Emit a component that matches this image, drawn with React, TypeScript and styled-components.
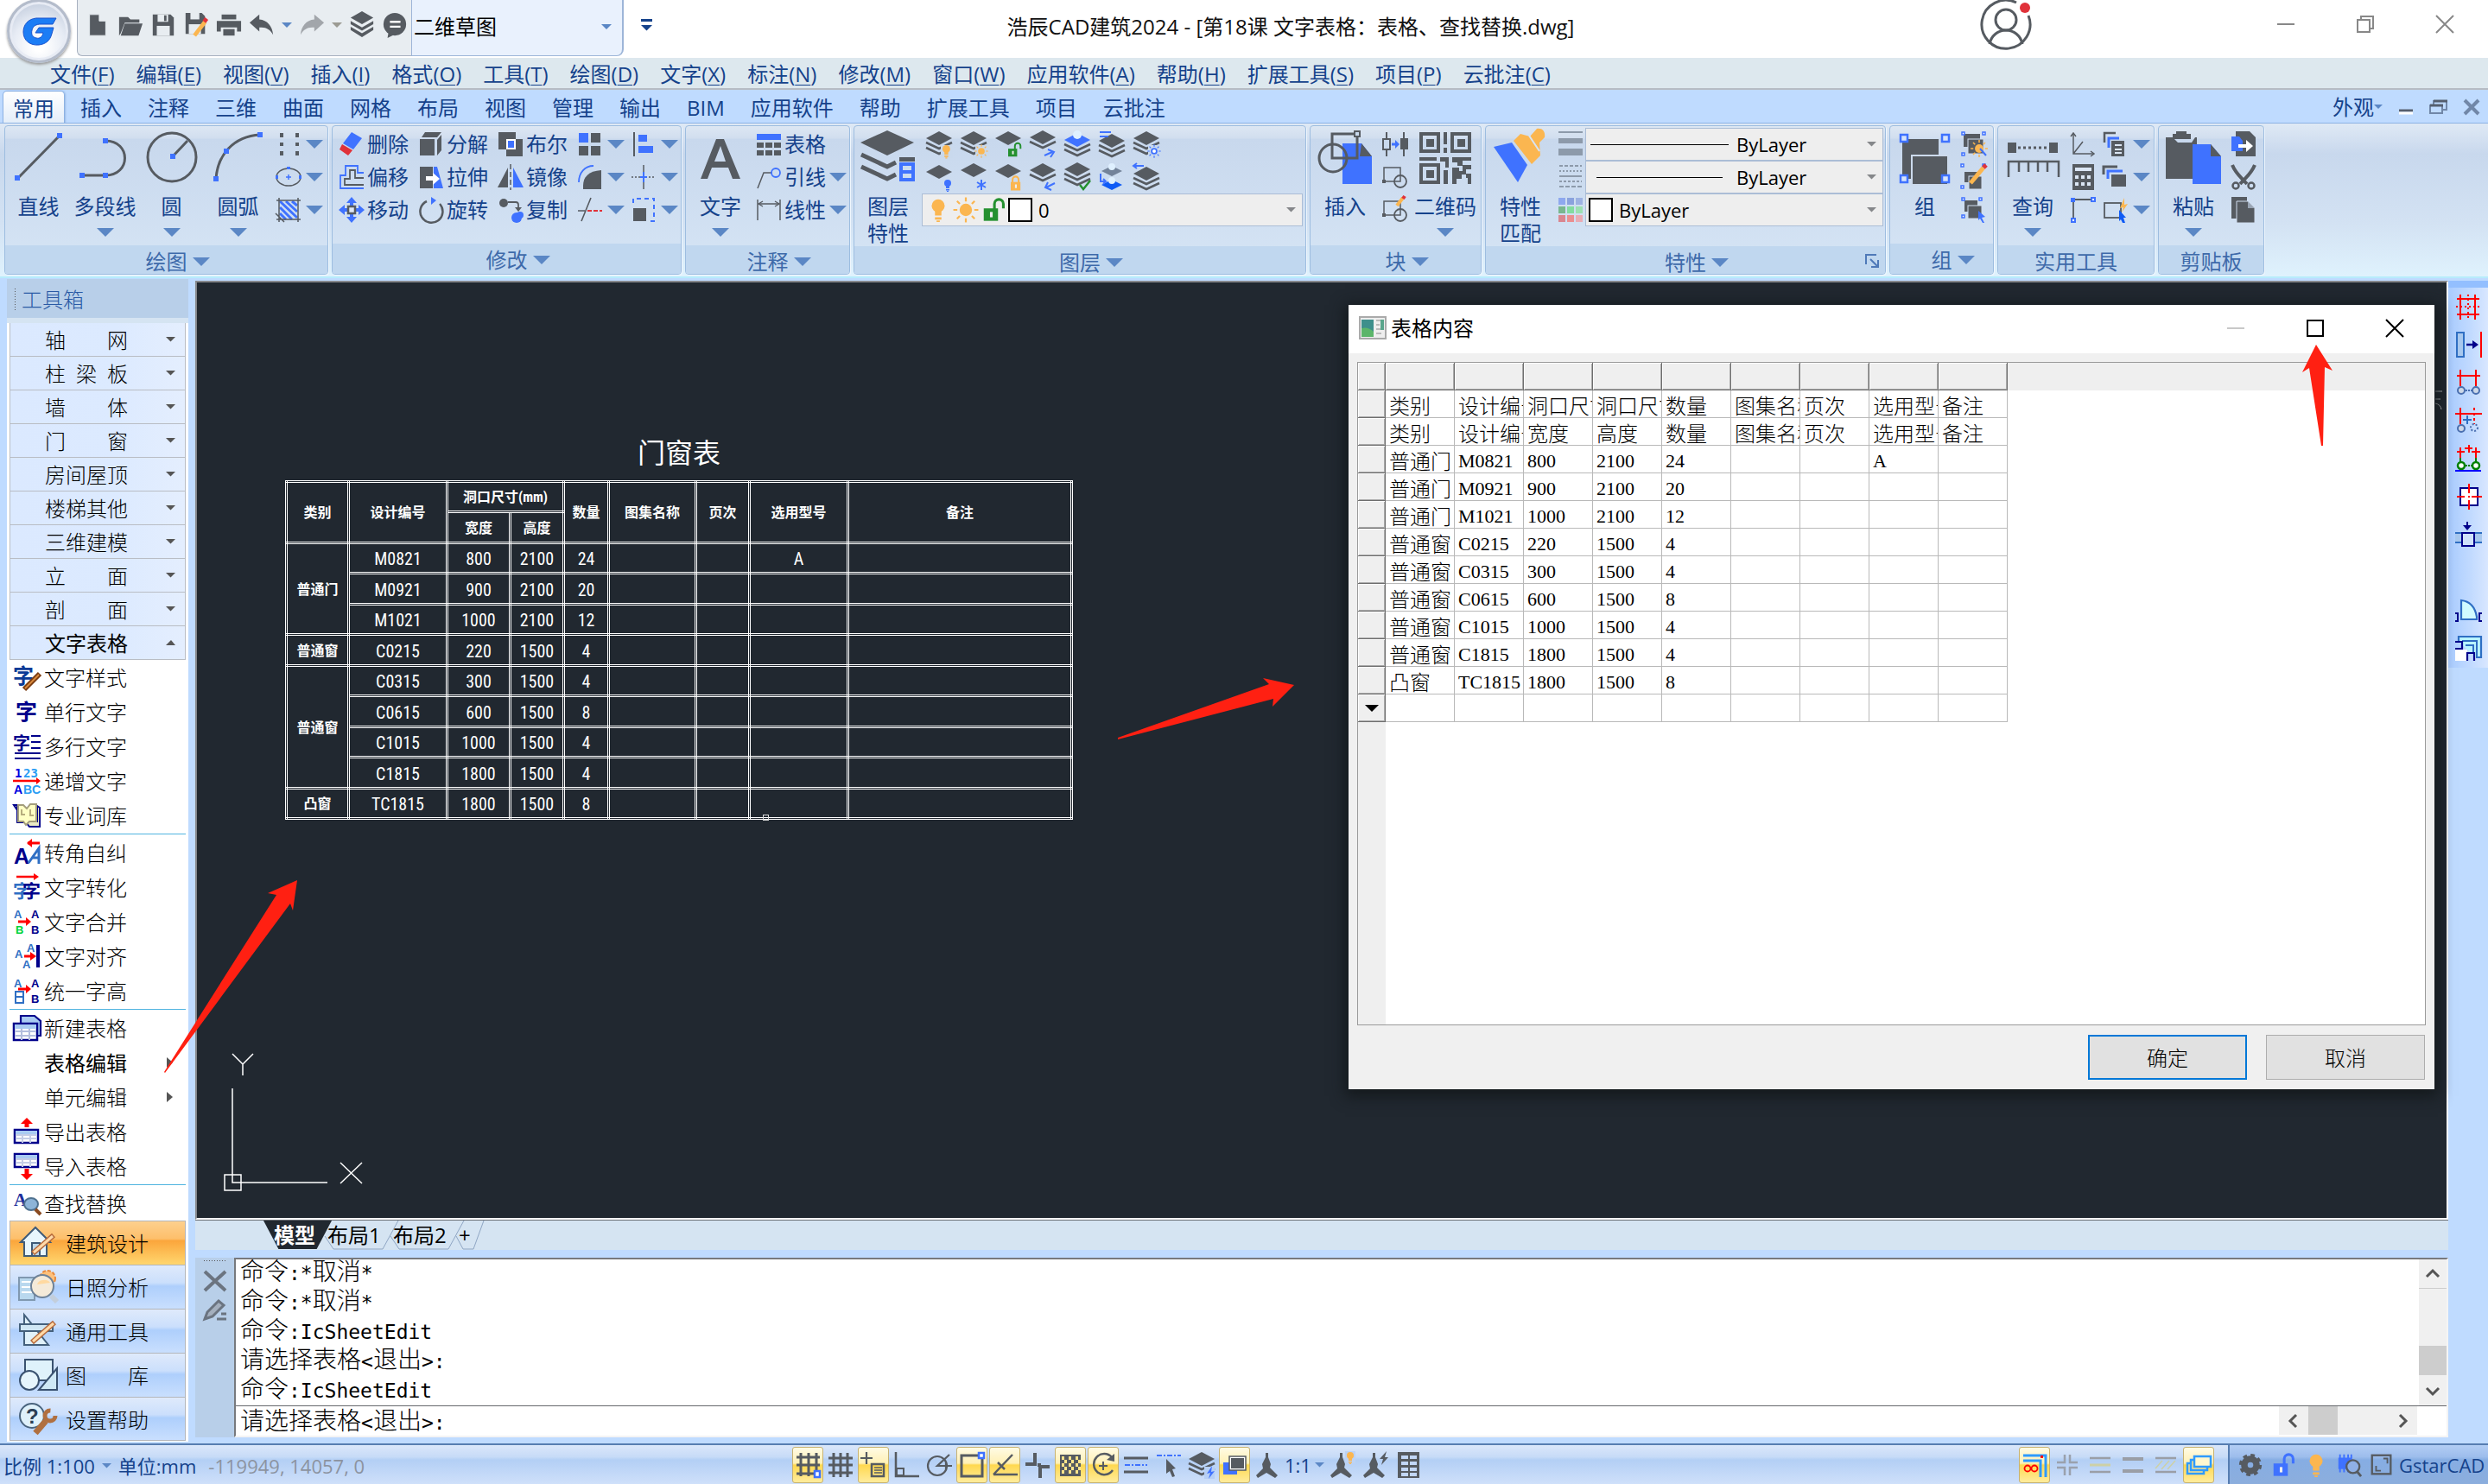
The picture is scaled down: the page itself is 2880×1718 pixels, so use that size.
import React, { ReactNode } from "react";
import styled, { createGlobalStyle, css } from "styled-components";

const UI = '"Open Sans", "Noto Sans CJK SC", sans-serif';
const SONG = '"Noto Sans CJK SC", sans-serif';
const D = "#565b61";
const B = "#3f72ff";
const O = "#fbb650";
const G = "#24902f";
const R = "#e0323a";
const NAVY = "#00008b";
const MID = "#2f6fc4";
const RED = "#ff0000";
const INK = "#15428b";

const Global = createGlobalStyle`
  *, *::before, *::after { box-sizing: border-box; }
  body { margin: 0; background: #bfdbff; font-family: ${UI}; font-size: 24px; line-height: 32px; color: ${INK}; }
  button { border: 0; margin: 0; padding: 0; background: none; font: inherit; color: inherit; text-align: left; }
  select, input { font: inherit; color: inherit; border: 0; margin: 0; padding: 0; background: transparent; outline: 0; appearance: none; }
  svg { display: block; flex: none; overflow: visible; }
`;

const Page = styled.div`
  display: flex;
  flex-direction: column;
  min-height: 100vh;
  white-space: nowrap;
`;

/* ---------- icons ---------- */

type IconProps = { name: string; size?: number };

const stack = (y: number, top = D, n = 2, w = 15) => (
  <g>
    <path d={`M16 ${y}l${w} 8-${w} 8-${w}-8z`} fill={top} />
    {Array.from({ length: n }, (_, i) => (
      <path key={i} d={`M${16 - w} ${y + 13 + i * 6}l${w} 7 ${w}-7`} fill="none" stroke={D} strokeWidth="2.5" />
    ))}
  </g>
);

const tri = (pts: string, fill: string) => <polygon points={pts} fill={fill} />;
const ln = (d: string, c = D, w = 2, dash?: string) => (
  <path d={d} fill="none" stroke={c} strokeWidth={w} strokeDasharray={dash} />
);
const rc = (x: number, y: number, w: number, h: number, fill: string, stroke?: string, sw = 2) => (
  <rect x={x} y={y} width={w} height={h} fill={fill} stroke={stroke} strokeWidth={stroke ? sw : undefined} />
);
const glyph = (t: string, x: number, y: number, size: number, fill: string, family = "Liberation Sans") => (
  <text x={x} y={y} fontSize={size} fontWeight="700" fill={fill} fontFamily={`"${family}", "Noto Sans CJK SC", sans-serif`}>
    {t}
  </text>
);
const bulb = (x: number, y: number, k: number, c: string) => (
  <g fill={c} transform={`translate(${x} ${y}) scale(${k})`}>
    <circle cx="8" cy="8" r="8" />
    <path d="M4 12h8v8H4zM4 22h8v3H4zM6 26h4v2H6z" />
  </g>
);
const lock = (x: number, y: number, k: number, c: string, open = true) => (
  <g transform={`translate(${x} ${y}) scale(${k})`}>
    <path d={open ? "M12 12V6a5 5 0 0110 0v5" : "M3 12V7a5 5 0 0110 0v5"} fill="none" stroke={c} strokeWidth="3" />
    <rect x="0" y="11" width="16" height="14" fill={c} />
    <rect x="7" y="15" width="3" height="6" fill="#eee" />
  </g>
);
const sun = (x: number, y: number, r: number, c: string) => (
  <g>
    <circle cx={x} cy={y} r={r * 0.55} fill={c} />
    {[0, 45, 90, 135, 180, 225, 270, 315].map((a) => (
      <path key={a} d={`M${x} ${y - r * 0.75}v${-r * 0.35}`} stroke={c} strokeWidth={r / 6} transform={`rotate(${a} ${x} ${y})`} />
    ))}
  </g>
);
const corners = (a: number, b: number, s: number, c = B) =>
  [[a, a], [b, a], [a, b]].map(([x, y]) => <rect key={`${x}-${y}`} x={x} y={y} width={s} height={s} fill="#fff" stroke={c} strokeWidth="1.5" />);
const compass = <path d="M14 2h3v5l3 8-1 4 9 9-3 3-10-6-10 6-2-3 8-8-1-5 4-8z" fill={D} />;
const sheetGrid = (y: number) => (
  <g>
    {rc(2, y, 27, 15, "#fff", NAVY, 2.5)}
    {rc(3, y + 1, 25, 4, "#a9cbf2")}
    {ln(`M3 ${y + 6}h25M3 ${y + 10}h25M11 ${y + 5}v10M20 ${y + 5}v10`, "#c4cde6", 2)}
  </g>
);

const shapes: Record<string, ReactNode> = {
  points: <path d="M6 3h4v5H6zM24 3h4v5h-4zM6 14h4v4H6zM24 14h4v4h-4zM6 24h4v5H6zM24 24h4v5h-4z" fill={D} />,
  ellipse: <g><ellipse cx="16" cy="16" rx="14" ry="10" fill="none" stroke={D} strokeWidth="1.5" />{ln("M16 13v6M13 16h6", B, 1.5)}{rc(14, 4, 4, 3, B)}{rc(1, 14, 3, 4, B)}{rc(28, 14, 3, 4, B)}</g>,
  hatch: <g>{ln("M6 6l20 19M6 13l14 14M6 20l7 7M13 6l13 12M20 6l6 5", B, 3)}{ln("M2 5h28M2 27h28M5 2v28M27 2v28M1 20l10 10", D, 1.5)}</g>,
  erase: <g>{tri("16,2 28,9 18,22 6,15", B)}{tri("5,16 17,23 12,29 2,22", R)}</g>,
  explode: <g fill={D}><path d="M3 10h17v19H3zM9 2h19l-5 6H5zM23 11l5-6v18l-5 6z" /></g>,
  boolean: <g>{rc(2, 2, 20, 20, D)}{rc(11, 10, 19, 20, D)}{rc(11, 10, 11, 12, "#fff")}{rc(13, 12, 7, 8, B)}</g>,
  array: <g>{rc(3, 3, 11, 11, B)}{rc(17, 3, 11, 11, D)}{rc(3, 18, 11, 11, D)}{rc(17, 18, 11, 11, D)}</g>,
  align: <g>{ln("M5 2v28", D, 2)}{rc(10, 5, 10, 8, B)}{rc(10, 18, 17, 8, B)}</g>,
  offset: <g>{ln("M30 29H3V14h6V3h14v8h7", B, 1.8)}{ln("M30 25H8v-7h6V8h6v9h10", D, 1.8)}</g>,
  stretch: <g>{rc(3, 4, 15, 25, D)}{tri("19,4 23,4 30,29 19,29", B)}<path d="M10 15h8v-4l8 7-8 7v-5h-8z" fill="#fff" /></g>,
  mirror: <g>{tri("13,5 13,28 1,28", D)}{ln("M16 1v30", D, 1.5, "6 3")}{tri("19,5 31,28 19,28", B)}</g>,
  fillet: <g><path d="M8 30V26C8 16 14 9 29 8v22z" fill={D} />{ln("M3 22C3 11 10 3 20 3", B, 1.8)}</g>,
  breakAt: <g>{ln("M2 16h28", D, 1.5, "2 2")}{ln("M16 2v28", D, 1.5, "9 10")}{ln("M16 10v12M12 16h8", B, 2)}</g>,
  move: <g><path d="M16 1l6 7h-4v16h4l-6 7-6-7h4V8h-4zM1 16l7-6v4h16v-4l7 6-7 6v-4H8v4z" fill={B} />{rc(12, 12, 8, 8, "#dfe8f5", D, 2.5)}</g>,
  rotate: <g>{ln("M11 6A13 13 0 1026 9", D, 2.5)}{tri("16,1 22,5 16,10", B)}</g>,
  copy: <g><circle cx="8" cy="8" r="5" fill={D} />{ln("M13 7h9q3 0 3 3v4", D, 1.8)}{tri("21,13 29,13 25,18", D)}<circle cx="23" cy="25" r="6" fill={B} /><circle cx="27" cy="22" r="4" fill={B} /></g>,
  trim: <g>{ln("M6 29L17 2M2 17h8", D, 1.6)}{ln("M13 17h17", R, 2, "5 2")}</g>,
  scale: <g>{ln("M4 8V3h24v26h-5", B, 2, "5 4")}{rc(4, 14, 15, 15, D)}</g>,
  table: <g>{rc(2, 4, 28, 7, B)}{[2, 12, 22].map((x) => <g key={x}>{rc(x, 14, 8, 6, D)}{rc(x, 23, 8, 6, D)}</g>)}</g>,
  leader: <g>{ln("M3 29L10 11h9", D, 1.5)}<circle cx="24" cy="11" r="5" fill="none" stroke={B} strokeWidth="1.8" /></g>,
  dim: <g>{ln("M3 4v24M29 4v24M4 9h24", D, 1.5)}{ln("M9 6l-5 3 5 3M23 6l5 3-5 3", D, 1.3)}</g>,
  ly1: <g>{stack(1)}{rc(18, 17, 14, 15, "#c9d9ed")}{bulb(20, 17, 0.55, O)}</g>,
  ly2: <g>{stack(1)}{rc(18, 17, 14, 15, "#c9d9ed")}{sun(25, 24, 7, O)}</g>,
  ly3: <g>{stack(1, D, 0)}{lock(16, 14, 0.65, G)}</g>,
  ly4: <g>{stack(0, D, 1)}{ln("M18 29l9-4M22 22l7 3-4 6", B, 2)}</g>,
  ly5: <g>{stack(3, B)}<circle cx="16" cy="5" r="5" fill="#dff0ff" /></g>,
  ly6: <g>{stack(4)}{ln("M2 2h13M2 7h10", B, 2)}</g>,
  ly7: <g>{stack(1)}{rc(18, 17, 14, 15, "#c9d9ed")}{sun(25, 24, 7, B)}<circle cx="25" cy="24" r="2" fill="#fff" /></g>,
  ly8: <g>{stack(2, D, 0)}{bulb(22, 19, 0.5, B)}</g>,
  ly9: <g>{stack(0, D, 0)}{ln("M25 19v12M20 22l10 6M20 28l10-6", B, 2)}</g>,
  ly10: <g>{stack(1, D, 0)}{lock(19, 14, 0.7, O, false)}</g>,
  ly11: <g>{stack(0, D, 1)}{ln("M30 23l-10 5M22 22l-3 6 7 3", B, 2)}</g>,
  ly12: <g>{stack(-1)}{ln("M19 25l4 5 8-10", G, 2.5)}</g>,
  ly13: <g>{tri("16,3 28,9 16,15 4,9", "#73839a")}{tri("16,19 28,25 16,31 4,25", "#0f5bf5")}{ln("M3 12v9h6M6 18l3 3-3 3", B, 2)}<circle cx="16" cy="4" r="4" fill="#dff0ff" /><circle cx="16" cy="20" r="4" fill="#dff0ff" /></g>,
  ly14: <g>{stack(4)}{ln("M1 3h12M5 0L1 3l4 3", B, 2)}</g>,
  blk1: <g>{ln("M6 2v28M26 2v28", D, 2)}{rc(2, 10, 8, 12, "#c9d9ed", D)}{rc(22, 9, 9, 13, D)}{ln("M12 16h5", B, 3)}{tri("16,11 21,16 16,21", B)}</g>,
  blk2: <g>{rc(3, 5, 19, 16, "none", D, 1.5)}<circle cx="22" cy="21" r="7" fill="none" stroke={D} strokeWidth="1.8" />{rc(1, 19, 4, 4, D)}</g>,
  blk3: <g>{rc(3, 6, 19, 16, "none", D, 1.5)}<circle cx="22" cy="22" r="7" fill="none" stroke={D} strokeWidth="1.8" />{rc(1, 20, 4, 4, D)}{ln("M18 11l7-9", O, 4)}{ln("M25 3l2-3", R, 4)}</g>,
  weights: <g>{rc(2, 1, 28, 2, "#8d9aaa")}{rc(2, 9, 28, 6, "#8d9aaa")}{rc(2, 21, 28, 8, "#8d9aaa")}</g>,
  types: <g>{ln("M3 3h26", "#8d9aaa", 2, "4 2")}{ln("M3 9h26", "#8d9aaa", 2, "2 2")}{ln("M3 15h26", "#8d9aaa", 2)}{ln("M3 21h26", "#8d9aaa", 2, "3 2")}{ln("M3 27h26", "#8d9aaa", 2, "5 2")}</g>,
  colors: <g>{["#8ea8ee", "#8aa2dd", "#9db2e2", "#79b78f", "#83dca0", "#9be0b1", "#d9868f", "#ea8f90", "#e9abb4"].map((c, i) => <rect key={i} x={2 + (i % 3) * 10} y={2 + Math.floor(i / 3) * 10} width="8" height="8" fill={c} />)}</g>,
  grp1: <g>{rc(4, 4, 19, 15, D)}{rc(9, 10, 18, 17, D, "#d0ddef", 1)}{corners(2, 26, 3)}{sun(22, 21, 9, O)}{ln("M23 21l7 8", B, 2)}</g>,
  grp2: <g>{rc(5, 10, 16, 12, D)}{rc(10, 15, 15, 15, D, "#d0ddef", 1)}{corners(1, 26, 3)}{ln("M12 23L27 5", O, 5)}{ln("M27 5l3-3", R, 5)}</g>,
  grp3: <g>{rc(5, 5, 15, 13, D)}{rc(9, 11, 16, 15, D, "#d0ddef", 1)}{corners(2, 22, 3)}{tri("21,17 29,24 25,25 28,31 26,31 23,26 21,28", B)}</g>,
  ucs: <g>{ln("M5 3v24h24M5 27l11-14", D, 1.5)}{ln("M2 7l3-4 3 4M25 24l4 3-4 3", D, 1.5)}</g>,
  calc: <g>{rc(4, 1, 25, 30, D)}{rc(7, 5, 19, 4, "#dbe6f4")}{[7, 14, 21].map((x) => <g key={x}>{rc(x, 14, 4, 4, "#dbe6f4")}{rc(x, 22, 4, 4, "#dbe6f4")}</g>)}</g>,
  cornerPts: <g>{ln("M5 4h24M5 4v25", D, 1.8)}{rc(2, 2, 5, 5, B)}{rc(26, 2, 4, 4, "#fff", B)}{rc(3, 26, 4, 4, "#fff", B)}</g>,
  copies: <g>{ln("M3 14V3h13", D, 2.5)}{ln("M8 20V9h12", B, 3)}{rc(11, 12, 15, 18, D)}{ln("M15 17h8M15 22h8M15 26h8", "#dbe6f4", 2)}</g>,
  cascade: <g>{ln("M2 13V4h16", D, 3)}{ln("M7 18V9h17", B, 3)}{rc(11, 13, 17, 14, D)}</g>,
  select: <g>{rc(3, 8, 19, 17, "none", D, 1.8)}{tri("26,2 21,14 25,13 23,19 30,9 26,10", O)}{tri("20,16 28,25 25,25 27,31 24,31 22,27 20,29", "#0f5bf5")}</g>,
  paste1: <g><path d="M7 1h16l7 7v22H7z" fill={D} /><path d="M2 7h9l4 5v12H2z" fill={B} /><path d="M10 16h9v-5l8 7-8 7v-5h-9z" fill="#fff" /></g>,
  cut: <g>{ln("M3 2c4 10 9 13 17 22M29 2c-4 10-9 13-17 22", D, 4)}<circle cx="7" cy="26" r="3.5" fill="none" stroke={D} strokeWidth="2.5" /><circle cx="25" cy="26" r="3.5" fill="none" stroke={D} strokeWidth="2.5" /></g>,
  docs: <g>{rc(2, 1, 18, 25, D)}<path d="M8 6h13l8 8v17H8z" fill={D} stroke="#d0ddef" /><path d="M21 6v8h8z" fill="#9aa6b5" /></g>,
  /* quick access */
  new: <path d="M6 3h12l8 8v18H6zM18 3v8h8" fill={D} stroke="#e8edf1" strokeWidth="1" />,
  open: <path d="M2 29V6h11l3 3h11v4H9L4 26M9 14h22l-5 15H4z" fill={D} />,
  save: <g><path d="M3 3h22l4 4v22H3z" fill={D} />{rc(9, 3, 13, 9, "#e8edf1")}{rc(8, 17, 16, 12, "#e8edf1")}{rc(17, 4, 3, 7, D)}</g>,
  saveAs: <g><path d="M3 1h20l4 4v22H3z" fill={D} />{rc(9, 1, 11, 8, "#e8edf1")}{rc(7, 15, 15, 12, "#e8edf1")}{ln("M14 29L27 12", O, 5)}{ln("M26 12l3-4", R, 5)}</g>,
  print: <g>{rc(7, 3, 18, 6, D)}<path d="M1 11h30v13h-5v-5H6v5H1z" fill={D} />{rc(9, 21, 14, 8, D)}</g>,
  undo: <path d="M1 13L13 3v6c10 1 16 8 17 19-4-7-9-10-17-9v5z" fill={D} />,
  redo: <path d="M31 13L19 3v6C9 10 3 17 2 28c4-7 9-10 17-9v5z" fill="#a2a6ab" />,
  layers: <g><path d="M16-1l14 8-14 8L2 7zM2 11l14 8 14-8v4l-14 8-14-8zM2 18l14 8 14-8v4l-14 9-14-9z" fill={D} /></g>,
  chat: <g><circle cx="16" cy="15" r="14" fill={D} /><path d="M8 26l-1 6 8-4z" fill={D} />{ln("M10 12h13M10 18h13", "#fff", 2.5)}</g>,
  /* toolbox */
  tStyle: <g>{glyph("字", 0, 23, 24, "#0a3a96", "Noto Sans CJK SC")}{ln("M13 30L31 12", "#7a3b10", 6)}{ln("M14 29L30 13", "#d98a3d", 2)}</g>,
  tSingle: glyph("字", 3, 25, 25, NAVY, "Noto Sans CJK SC"),
  tMulti: <g>{glyph("字", 0, 20, 20, NAVY, "Noto Sans CJK SC")}{ln("M21 4h11M21 11h11M21 18h11M2 24h30M2 30h30", NAVY, 2)}</g>,
  tInc: <g>{glyph("1", 2, 12, 14, "#0000e0", "DejaVu Sans Mono")}{glyph("23", 12, 12, 14, "#2a9df4", "DejaVu Sans Mono")}{ln("M0 16h30", RED, 2.5)}{tri("27,12 32,16 27,20", RED)}{glyph("A", 1, 31, 14, "#0000e0")}{glyph("BC", 12, 31, 14, "#2a9df4")}</g>,
  tBook: <g><path d="M1 4h4v20h10l4 5h12V7l-3-2v18H14z" fill="#e9e9c4" stroke={NAVY} strokeWidth="2" /><path d="M6 4h6l4 4 4-5h7v20h-8l-4 4-3-4H6z" fill="#ffffc4" stroke="#a39d7c" strokeWidth="2" />{ln("M10 9v6h4M20 9v7h4", "#b7ad7e", 2)}</g>,
  tRotate: <g>{ln("M17 5h14", RED, 3)}{tri("16,5 22,0 22,10", RED)}{glyph("A", 1, 29, 25, NAVY)}{ln("M18 28l12-17v18M22 22h8", MID, 3)}</g>,
  tConvert: <g>{ln("M4 4h22", RED, 2.5)}{tri("24,0 30,4 24,8", RED)}{glyph("字", 0, 28, 21, MID, "Noto Sans CJK SC")}{glyph("字", 11, 28, 21, NAVY, "Noto Sans CJK SC")}</g>,
  tMerge: <g>{glyph("A", 1, 12, 13, MID)}{glyph("B", 3, 30, 13, "#00d43a")}{glyph("A", 21, 12, 13, NAVY)}{glyph("B", 21, 30, 13, NAVY)}{ln("M6 16h10", RED, 3)}{tri("15,11 21,16 15,21", RED)}</g>,
  tAlign: <g>{glyph("A", 2, 18, 13, MID)}{glyph("A", 16, 11, 13, MID)}{glyph("A", 11, 30, 13, MID)}{ln("M29 3v26", NAVY, 4)}{ln("M13 16h8", RED, 3)}{tri("20,11 27,16 20,21", RED)}</g>,
  tHeight: <g>{glyph("A", 1, 12, 13, MID)}{rc(3, 17, 9, 13, "none", MID)}{ln("M3 23h9", MID)}{glyph("A", 21, 12, 13, NAVY)}{glyph("B", 21, 30, 13, NAVY)}{ln("M6 14h10", RED, 3)}{tri("15,9 21,14 15,19", RED)}</g>,
  tNew: <g><path d="M9 11V2h16l7 6v17h-4" fill="#a9cbf2" stroke={NAVY} strokeWidth="2.2" />{rc(1, 11, 27, 19, "#fff", NAVY, 2.5)}{rc(2, 12, 25, 5, "#a9cbf2")}{ln("M2 20h25M2 25h25M10 17v13M19 17v13", "#b4bede", 2)}</g>,
  tExport: <g>{tri("16,0 23,7 9,7", RED)}{ln("M16 5v6", RED, 5)}{sheetGrid(14)}</g>,
  tImport: <g>{sheetGrid(2)}{ln("M16 19v7", RED, 5)}{tri("9,25 23,25 16,32", RED)}</g>,
  tFind: <g>{glyph("A", 1, 19, 21, "#1d2f9c", "Liberation Serif")}<ellipse cx="21" cy="17" rx="8" ry="7" fill="#8db4d8" stroke="#4f718f" strokeWidth="2" />{ln("M26 23l6 6", "#8a4a20", 4)}</g>,
  /* right palette */
  p1: <g>{ln("M3 7h26M3 25h26M7 2v29M24 2v29", RED, 2)}{ln("M2 16h28M16 2v28", RED, 2, "2 3")}</g>,
  p2: <g>{rc(3, 2, 8, 28, "#a8c8ee", MID)}{ln("M14 16h10", NAVY, 2.5)}{tri("21,11 28,16 21,21", NAVY)}{ln("M31 1v30", RED, 2)}</g>,
  p3: <g>{ln("M3 8h27M7 1v19M25 1v19", RED, 2)}<circle cx="8" cy="25" r="4" fill="#cdd8e8" stroke="#4a6fb0" strokeWidth="2" /><circle cx="25" cy="25" r="4" fill="#cdd8e8" stroke="#4a6fb0" strokeWidth="2" />{ln("M13 25h8", "#4a6fb0", 2, "2 1")}</g>,
  p4: <g>{ln("M1 8h31M7 1v19", RED, 2)}{ln("M23 1v19", RED, 2, "3 3")}<circle cx="8" cy="25" r="4" fill="#cdd8e8" stroke="#4a6fb0" strokeWidth="2" /><circle cx="23" cy="24" r="4" fill="none" stroke="#4a6fb0" strokeWidth="2" strokeDasharray="2 2" />{ln("M15 10v10M10 15h10", MID, 2)}</g>,
  p5: <g>{ln("M3 8h9M20 8h10M7 3v12M25 3v12M12 4h9M17 0v9", RED, 2)}{ln("M7 15v6M25 15v6", "#008000", 2)}<circle cx="8" cy="24" r="4" fill="#fff" stroke="#008000" strokeWidth="2.5" /><circle cx="25" cy="24" r="4" fill="#fff" stroke="#008000" strokeWidth="2.5" />{ln("M13 24h8", "#008000", 2, "2 1")}{ln("M1 30h30", "#0000ff", 2)}</g>,
  p6: <g>{rc(7, 6, 20, 20, "#fff", NAVY)}{ln("M3 16h9M20 16h12M17 1v11M17 20v11", RED, 2)}{rc(16, 15, 2, 2, RED)}</g>,
  p7: <g>{rc(1, 14, 31, 11, "#a8c8ee")}{ln("M1 14h31M1 25h31", MID, 2)}{rc(9, 14, 14, 15, "#cfe1fb", NAVY)}{ln("M15 1v6", NAVY, 2)}{tri("10,5 20,5 15,11", NAVY)}</g>,
  p9: <g><path d="M8 26V4c10 1 16 8 18 19v3z" fill="#d0fbff" stroke={MID} strokeWidth="2.2" />{ln("M1 19h3v9H1M32 19h-3v9h3", NAVY, 2)}</g>,
  p10: <g><path d="M5 8V2h26v24h-6" fill="#b8f4ff" stroke={MID} strokeWidth="2.2" />{ln("M9 7h17v18M13 12h9v10", MID, 2)}<path d="M1 17h14v13H1z" fill="#fff" />{ln("M1 8h8v8H1M15 30v-9h8v9", NAVY, 2.2)}</g>,
  /* status */
  s1: <g>{ln("M8 2v27M17 2v27M26 2v27M3 7h27M3 16h27M3 26h27", D, 3)}{rc(24, 23, 6, 7, "#fff", B, 2.5)}</g>,
  s2: ln("M8 2v28M16 2v28M24 2v28M2 8h28M2 16h28M2 25h28", D, 3),
  s3: <g>{ln("M8 1v14M1 8h14", D, 2.2)}{rc(14, 15, 14, 14, "none", D, 2.5)}{ln("M17 19h9M17 22h9M17 25h9", D, 1.6)}</g>,
  s4: <g>{ln("M4 1v28h27", D, 2.5)}{rc(5, 20, 8, 8, "none", D, 2)}</g>,
  s5: <g><circle cx="14" cy="17" r="11" fill="none" stroke={D} strokeWidth="2.2" />{ln("M31 17H14L28 4M24 12v10", D, 2.2)}</g>,
  s6: <g>{rc(4, 5, 24, 24, "none", D, 3)}{rc(24, 2, 6, 6, "#fff", B, 2.5)}</g>,
  s7: <g>{ln("M3 27L25 4M3 27h28M8 13l8 8", D, 2.5)}</g>,
  s8: ln("M13 2v13H2M19 31V18h11M8 15h6M18 18v-4", D, 4),
  s9: <g>{rc(4, 4, 24, 25, D)}{Array.from({ length: 15 }, (_, i) => <rect key={i} x={6 + (i % 3) * 8 - (Math.floor(i / 3) % 2) * 0 + (Math.floor(i / 3) % 2 ? 3 : 0)} y={6 + Math.floor(i / 3) * 4} width="3" height="4" fill="#ffe48a" />)}</g>,
  s10: <g>{ln("M26 7A12 12 0 1027 22", D, 2.5)}{tri("29,3 29,12 20,10", D)}{ln("M16 12v10M11 17h10", D, 2)}</g>,
  s11: <g>{ln("M2 8h28M2 24h28", D, 3)}{ln("M3 16h26", B, 2, "6 2 2 2")}</g>,
  s12: <g>{ln("M2 5h28", B, 2, "6 2 2 2")}{tri("13,9 24,20 20,21 23,29 20,30 17,23 13,26", D)}</g>,
  s13: <g>{stack(1)}{rc(19, 18, 12, 14, "#b6cff5")}{tri("28,17 22,26 26,25 24,32 31,23 27,24", B)}</g>,
  s14: <g>{rc(3, 13, 16, 14, B)}{rc(10, 6, 19, 16, "#fff", D, 1.5)}{rc(12, 8, 15, 12, D)}</g>,
  s15: compass,
  s16: <g>{compass}{rc(20, 0, 12, 14, "#bcd3f6")}{bulb(22, 1, 0.5, O)}</g>,
  s17: <g>{compass}{tri("30,0 22,9 26,9 24,16 32,7 28,7", D)}</g>,
  s18: <g>{rc(5, 1, 25, 30, D)}{[9, 19].map((x) => [5, 12, 19, 25].map((y) => <rect key={`${x}${y}`} x={x} y={y} width="8" height="4" fill="#c2d7f7" />))}</g>,
  r1: <g>{ln("M3 5h26v25M3 11h20v19", "#2f9bff", 3)}{rc(23, 5, 3, 3, RED)}<circle cx="8" cy="20" r="3.5" fill="none" stroke={RED} strokeWidth="1.8" /><circle cx="16" cy="20" r="3.5" fill="none" stroke={RED} strokeWidth="1.8" /></g>,
  r2: ln("M13 4v9H4M19 4v9h9M13 28v-9H4M19 28v-9h9", "#9aa1ad", 2.5),
  r3: <g>{ln("M4 8h24M4 24h24", "#9a9ea6", 2.5)}{ln("M4 16h24", "#cdd0a6", 3)}</g>,
  r4: ln("M4 9h24M4 23h24", "#9a9ea6", 4),
  r5: <g>{ln("M4 8h24M4 24h24", "#9a9ea6", 2.5)}{ln("M4 20l8-9M11 21l9-10M18 21l9-10", "#cdd0a6", 1.5)}</g>,
  r6: <g>{rc(3, 14, 19, 12, "#ffe38a", "#2f9bff", 2.5)}{rc(7, 10, 19, 12, "#ffe38a", "#2f9bff", 2.5)}{rc(11, 6, 19, 12, "#fff7cf", "#2f9bff", 2.5)}</g>,
  gear: <g><circle cx="16" cy="16" r="7.5" fill="none" stroke={D} strokeWidth="8" /><circle cx="16" cy="16" r="12" fill="none" stroke={D} strokeWidth="4" strokeDasharray="5 4.4" /></g>,
  unlock: lock(4, 2, 1.1, B),
  bulb: bulb(8, 3, 1, O),
  sun: sun(16, 16, 14, O),
  lockGreen: lock(4, 2, 1.1, G),
  chip: <g>{rc(3, 7, 16, 14, B)}{ln("M5 3v22M10 3v22M15 3v22M19 3v12", B, 2)}<circle cx="21" cy="18" r="8" fill="#8fb0e6" stroke={D} strokeWidth="2.5" />{ln("M26 24l5 6", D, 3)}</g>,
  full: <g>{rc(4, 4, 23, 23, "none", D, 2.5)}{ln("M18 8h5v6M9 17v6h6", D, 2)}</g>,
};

const largeShapes: Record<string, ReactNode> = {
  line: <g>{ln("M7 56L56 6", D, 3)}{rc(4, 52, 6, 6, B)}{rc(53, 3, 6, 6, B)}</g>,
  pline: <g>{ln("M6 52h26c30 0 30-40 0-40", D, 3)}{rc(2, 49, 6, 6, B)}{rc(29, 49, 6, 6, B)}{rc(29, 9, 6, 6, B)}</g>,
  circle: <g><circle cx="32" cy="31" r="28" fill="none" stroke={D} strokeWidth="3" />{ln("M33 30L50 12", D, 3)}{rc(30, 27, 6, 6, B)}</g>,
  arc: <g>{ln("M6 56C8 28 26 7 57 5", D, 3)}{rc(3, 53, 6, 6, B)}{rc(15, 21, 6, 6, B)}{rc(54, 2, 6, 6, B)}</g>,
  letterA: <path d="M9 56L27 10h9l19 46h-9l-5-13H22l-5 13zM25 36h13l-6-18z" fill={D} fillRule="evenodd" />,
  layerProps: <g>{tri("31,0 62,14 31,29 0,14", D)}{ln("M1 28l30 14 10-5M1 42l30 14 10-5", D, 5)}{rc(45, 31, 18, 5, D)}<path d="M45 37h18v22H45zM49 41v5h10v-5zM49 50v5h10v-5z" fill={B} fillRule="evenodd" /></g>,
  insert: <g><path d="M29 15h22l12 15v32H29z" fill={B} /><path d="M51 15l12 15H49z" fill={D} />{rc(17, 4, 29, 28, "none", D, 3)}<circle cx="18" cy="32" r="16" fill="none" stroke={D} strokeWidth="3" />{rc(43, 1, 6, 6, "#c9d9ed", D, 2)}</g>,
  qr: <g fill={D}>{[[2, 2], [38, 2], [2, 38]].map(([x, y]) => <g key={`${x}-${y}`}>{rc(x + 2, y + 2, 20, 20, "none", D, 4)}{rc(x + 8, y + 8, 9, 9, D)}</g>)}<path d="M30 2h4v14h-4zM30 20h4v6h-4zM2 31h20v4H2zM26 31h10v12h-4v-7h-6zM30 46h5v16h-5zM40 31h22v4H52v6h-6v-4h-6zM40 43h8v4h4v-7h10v5h-6v6h-5v5h-6v6h-5V50zM56 50h6v12h-4v-7h-2z" /></g>,
  match: <g><path d="M1 19l21-5 18 26-11 20z" fill={B} /><path d="M24 12l8-8 11 3 8-9c7-1 10 4 9 10l-6 6 1 15-10 10z" fill={O} />{ln("M42 6l12 18", "#d9e4f3", 2)}</g>,
  group: <g>{rc(6, 10, 42, 46, D)}{rc(17, 29, 42, 34, D, "#ccdaec", 2)}{rc(4, 5, 8, 8, "#d6e3fb", B, 2.5)}{rc(52, 5, 8, 8, "#d6e3fb", B, 2.5)}{rc(4, 52, 8, 8, "#d6e3fb", B, 2.5)}{rc(52, 52, 8, 8, "#d6e3fb", B, 2.5)}</g>,
  measure: <g>{rc(3, 14, 10, 12, D)}{rc(51, 14, 10, 12, D)}{ln("M15 20h35", D, 3, "3 3")}{ln("M4 54V36h58v18M16 36v12M27 36v12M38 36v12M49 36v12", D, 2.5)}</g>,
  paste: <g><path d="M0 8h8l6 6h16l4-6h2v12h-5v36H0z" fill={D} /><path d="M8 4h4V1h12v3h5v6H8z" fill={D} /><path d="M31 16h21l12 14v32H31z" fill={B} /><path d="M52 16l12 14H52z" fill={D} /></g>,
};

const Icon = ({ name, size = 32 }: IconProps) => (
  <svg width={size} height={size} viewBox="0 0 32 32" aria-hidden="true">{shapes[name]}</svg>
);
const LargeIcon = ({ name }: IconProps) => (
  <svg width={64} height={64} viewBox="0 0 64 64" aria-hidden="true">{largeShapes[name]}</svg>
);
const Caret = ({ w = 20, fill = "#5b87c5" }: { w?: number; fill?: string }) => (
  <svg width={w} height={w / 2} viewBox="0 0 20 10" aria-hidden="true"><path d="M0 0h20L10 10z" fill={fill} /></svg>
);

/* ---------- title bar ---------- */

const TitleBar = styled.header`
  display: grid;
  grid-template-columns: 1fr auto 1fr;
  align-items: start;
  height: 67px;
  background: #fff;
`;
const TitleLeft = styled.div`display: flex; height: 64px;`;
const Orb = styled.button`
  width: 74px; height: 74px; margin: -1px 7px 0 8px; flex: none; z-index: 1;
  border-radius: 50%; border: 3px solid #b4bccb;
  background: radial-gradient(circle at 50% 75%, #fff 10%, #e6ebf4 50%, #b3bfd3 100%);
  box-shadow: inset 0 0 0 3px #e7ebf4, 0 2px 3px #999;
  display: grid; place-items: center;
`;
const QuickBar = styled.div`
  display: flex; align-items: center;
  height: 65px; padding: 0 0 6px 4px;
  background: #e8edf1; border: solid #a7b0bf; border-width: 0 0 1px 1px;
  border-radius: 0 0 0 6px;
`;
const QuickButton = styled.button<{ $w?: number }>`
  width: ${(p) => p.$w ?? 38}px; height: 40px; display: grid; place-items: center;
`;
const WorkspacePick = styled.label`
  display: flex; align-items: center;
  width: 246px; height: 65px; padding: 0 12px 2px 2px;
  background: #e9f1fd; border: solid #9db5d8; border-width: 0 2px 1px 1px;
  border-radius: 0 0 8px 0;
`;
const PickSelect = styled.select`flex: 1; width: 100%; height: 36px; color: #000;`;
const Customize = styled.button`display: grid; gap: 4px; align-content: center; justify-items: center; width: 52px; height: 58px;`;
const Bar = styled.i`width: 13px; height: 3px; background: ${INK};`;
const Title = styled.h1`margin: 0; padding: 14px 0 0 108px; font: 400 24px/34px ${UI}; color: #111;`;
const TitleRight = styled.div`display: flex; justify-content: flex-end; padding-right: 4px;`;
const UserButton = styled.button`width: 60px; height: 62px; margin-right: 248px;`;
const WinButton = styled.button`width: 92px; height: 56px; display: grid; place-items: center;`;

/* ---------- menus and tabs ---------- */

const MenuBar = styled.nav`
  display: flex; gap: 25px; height: 37px; padding: 3px 0 0 58px;
  background: #dde8ee; border-bottom: 2px solid #b6bcc4;
`;
const MenuItem = styled.button`line-height: 32px; height: 32px;`;
const Key = styled.span`text-decoration: underline; text-underline-offset: 3px; text-decoration-thickness: 1px;`;
const TabBar = styled.nav`
  display: flex; height: 38px; padding: 1px 0 0 3px; background: #bfdbff;
`;
const Tab = styled.button<{ $on?: boolean }>`
  padding: 0 15px; height: 38px; line-height: 40px;
  &:first-child { padding: 0 11px; margin-right: 3px; }
  ${(p) => p.$on && css`
    background: linear-gradient(#fff, #e3edf9); border: 1px solid #8db2e3; border-bottom: 0;
    border-radius: 5px 5px 0 0; box-shadow: 1px 0 2px #9bbbe6;
  `}
`;
const TabTools = styled.div`display: flex; align-items: center; gap: 16px; margin-left: auto; padding-right: 8px;`;
const Look = styled.button`display: flex; align-items: center; line-height: 34px;`;
const MiniButton = styled.button`display: grid; place-items: center; width: 22px; height: 30px;`;

/* ---------- ribbon ---------- */

const Ribbon = styled.section`
  display: flex; gap: 4px; height: 180px; padding: 2px 5px;
  border-top: 1px solid #8db2e3; border-bottom: 2px solid #b7ecfb;
  background: linear-gradient(#dfe9f5 0, #c8d8ed 20%, #d3e2f3 65%, #dff2fd 100%);
`;
const Group = styled.section<{ $w: number }>`
  width: ${(p) => p.$w}px; flex: none;
  display: flex; flex-direction: column;
  border: 1px solid #9dbde0; border-radius: 4px;
  box-shadow: 1px 1px 0 #eff6fd;
  background: linear-gradient(#dde7f3 0, #d1deef 14px, #c8d8ed 15px, #d6e5f5 100%);
  overflow: hidden;
`;
const GroupBody = styled.div<{ $pad?: number }>`
  display: flex; align-items: flex-start; height: 139px; padding-left: ${(p) => p.$pad ?? 0}px;
`;
const GroupLabel = styled.div`
  position: relative;
  display: flex; align-items: center; justify-content: center; gap: 6px; flex: 1; padding-top: 3px;
  background: #c0d7ef; color: #3e6aaa;
`;
const Balance = styled.i`width: 20px;`;
const Launcher = styled.button`position: absolute; right: 7px; top: 9px;`;
const Large = styled.button<{ $w?: number }>`
  width: ${(p) => p.$w ?? 80}px; flex: none; padding-top: 5px;
  display: flex; flex-direction: column; align-items: center;
`;
const LargeText = styled.span`margin-top: 8px; line-height: 31px; text-align: center; white-space: pre;`;
const CaretRow = styled.span`height: 30px; display: grid; place-items: center;`;
const Column = styled.div<{ $w?: number; $pad?: number }>`
  display: flex; flex-direction: column; padding: 2px 0 0 ${(p) => p.$pad ?? 0}px; flex: none;
  width: ${(p) => (p.$w ? `${p.$w}px` : "auto")};
`;
const Small = styled.button<{ $center?: boolean }>`
  display: flex; align-items: center; gap: 2px; height: 38px;
  justify-content: ${(p) => (p.$center ? "center" : "flex-start")};
`;
const Drop = styled.span`padding-left: 2px;`;
const IconRow = styled.div`display: flex;`;
const IconButton = styled.button`width: 40px; height: 38px; display: grid; place-items: center;`;
const Combo = styled.label<{ $w: number }>`
  display: flex; align-items: center; gap: 2px;
  width: ${(p) => p.$w}px; height: 38px; padding: 0 7px 0 3px;
  background: #eee; border: 1px solid #abbdd6; color: #000;
`;
const ComboSelect = styled.select`flex: 1; height: 34px; padding-left: 5px; font-size: 22px; line-height: 34px;`;
const Swatch = styled.i`width: 28px; height: 28px; background: #fff; border: 2px solid #000; flex: none;`;
const Hairline = styled.i<{ $w: number; $pad: number }>`
  width: ${(p) => p.$w}px; height: 1px; margin: 0 ${(p) => p.$pad}px; background: #000; flex: none;
`;

/* ---------- workspace ---------- */

const Workspace = styled.main`display: flex; flex: 1; position: relative; background: #bfdbff;`;
const Toolbox = styled.aside`
  width: 210px; margin: 1px 8px 2px 8px; flex: none; background: #fff; color: #000; font-family: ${SONG};
  display: flex; flex-direction: column;
`;
const ToolboxTitle = styled.h2`
  margin: 0; height: 51px; padding: 0 8px; display: flex; align-items: center; gap: 5px;
  font: 300 24px/45px ${SONG}; color: #2a5aa5; background: #b8cfe9; border-bottom: 6px solid #d5e4f2;
`;
const Grip = styled.i<{ $w: number; $h: number }>`
  width: ${(p) => p.$w}px; height: ${(p) => p.$h}px; flex: none;
  background: radial-gradient(circle, #555 1px, transparent 1px) 0 0 / 3px 3px;
`;
const Section = styled.button`
  display: flex; align-items: center; justify-content: space-between;
  height: 39px; margin: 0 3px; padding: 0 11px 0 40px; font-weight: 300;
  border: 1px solid #b9bdc4; border-top: 0; background: linear-gradient(90deg, #dbe9ff, #dceaff 60%, #e4eefe);
`;
const Spread = styled.span<{ $bold?: boolean }>`
  width: 96px; text-align: justify; text-align-last: justify; white-space: normal;
  font-weight: ${(p) => (p.$bold ? 400 : 300)};
`;
const Tool = styled.button<{ $bold?: boolean }>`
  display: flex; align-items: center; gap: 4px; height: 40px; padding: 0 18px 0 7px;
  font-weight: ${(p) => (p.$bold ? 400 : 300)};
`;
const ToolText = styled.span`flex: 1;`;
const Blank = styled.i`width: 32px;`;
const Divider = styled.hr`margin: 1px 3px; border: 0; height: 1px; background: #4fb4e0; width: 204px;`;
const Mode = styled.button<{ $on?: boolean }>`
  display: flex; align-items: center; gap: 9px; height: 51px; margin: 0 3px; padding-left: 9px; font-weight: 300;
  border: 1px solid #b3b6bb; border-bottom-width: 0;
  &:last-child { border-bottom-width: 1px; }
  background: ${(p) => (p.$on
    ? "linear-gradient(#fdd08e 0, #fdbf6b 40%, #fba63c 45%, #ffd66e 100%)"
    : "linear-gradient(#dfeafb 0, #cbdffc 40%, #aecffc 48%, #c9dffe 100%)")};
`;

const Center = styled.div`flex: 1; min-width: 0; display: flex; flex-direction: column; padding: 3px 0 7px;`;
const Canvas = styled.section`
  position: relative; flex: 1; background: #212830;
  border: 2px solid; border-color: #86888c #fff #fff #86888c;
`;
const Drawing = styled.table`
  position: absolute; left: 102px; top: 229px; width: 912px; table-layout: fixed; border-collapse: collapse;
  color: #fff; font: 400 22px/24px "Roboto Condensed", "Liberation Sans Narrow", "Liberation Sans", "Noto Sans CJK SC", sans-serif;
`;
const DrawingTitle = styled.caption`font: 400 32px/40px "Noto Sans CJK SC", sans-serif; margin: -54px 0 14px; height: 40px;`;
const DrawRow = styled.tr`
  height: 35px;
  &:nth-child(even) { height: 36px; }
`;
const DrawHead = styled.th`border: 3px double #fff; padding: 2px 0 0; font-weight: 700; font-size: 16px; text-align: center; line-height: 20px;`;
const DrawCell = styled.td`border: 3px double #fff; padding: 2px 0 0; text-align: center; font-size: 20px; line-height: 24px;`;
const UcsMark = styled.svg`position: absolute; left: 30px; bottom: 30px;`;
const PickBox = styled.i`position: absolute; left: 655px; top: 616px; width: 7px; height: 7px; border: 1px solid #ddd;`;
const HiddenNote = styled.svg`position: absolute; right: 4px; top: 124px;`;
const Arrow = styled.svg<{ $x: number; $y: number }>`
  position: absolute; left: ${(p) => p.$x}px; top: ${(p) => p.$y}px; pointer-events: none;
`;

/* ---------- dialog ---------- */

const Dialog = styled.section`
  position: absolute; right: 14px; top: 26px; width: 1257px; height: 908px;
  display: flex; flex-direction: column; background: #f0f0f0; color: #000;
  box-shadow: 0 4px 16px 4px #14191c;
`;
const DialogBar = styled.header`display: flex; align-items: center; height: 56px; padding: 0 0 2px 12px; background: #fff;`;
const DialogTitle = styled.h2`margin: 0 0 0 5px; flex: 1; font: 400 24px/32px ${UI};`;
const DialogWin = styled.button`width: 92px; height: 54px; display: grid; place-items: center;`;
const DialogBody = styled.div`flex: 1; display: flex; flex-direction: column; gap: 11px; padding: 10px 10px 11px;`;
const GridFrame = styled.div`
  flex: 1; border: 1px solid #9a9a9a;
  background: linear-gradient(#efefef, #efefef) 0 0 / 100% 32px no-repeat,
    linear-gradient(#efefef, #efefef) 0 0 / 32px 100% no-repeat, #fff;
`;
const Grid = styled.table`width: 752px; table-layout: fixed; border-collapse: separate; border-spacing: 0; font: 300 24px/28px ${SONG};`;
const GridHead = styled.th`
  height: 32px; padding: 0; background: #efefef; border: solid #6e6e6e; border-width: 0 1px 1px 0;
  box-shadow: inset 1px 1px #fff, inset -1px -1px #a9a9a9;
`;
const GridCell = styled.td<{ $latin?: boolean }>`
  height: 32px; padding: 3px 0 0 4px; overflow: hidden; border: solid #b9b9b9; border-width: 0 1px 1px 0;
  ${(p) => p.$latin && css`padding-top: 5px; font: 400 22px/26px "Liberation Serif", serif;`}
`;
const Marker = styled.i`display: block; margin: 0 auto; width: 16px; border: solid transparent; border-width: 8px 8px 0; border-top-color: #000;`;
const DialogActions = styled.div`display: flex; justify-content: flex-end; gap: 22px; padding-right: 1px;`;
const DialogButton = styled.button<{ $main?: boolean }>`
  width: 184px; height: 52px; text-align: center; font: 300 24px/46px ${SONG}; color: #000; background: #e1e1e1;
  border: ${(p) => (p.$main ? "2px solid #0078d7" : "1px solid #adadad")};
`;

/* ---------- layout tabs and command line ---------- */

const LayoutTabs = styled.nav`
  display: flex; height: 35px; padding-left: 79px; background: #d5e4f2; border-top: 1px solid #6c6f75; color: #000;
`;
const ModelTab = styled.button`
  width: 79px; height: 33px; margin-right: -6px; line-height: 30px; padding-left: 12px; color: #fff; font-weight: 700;
  background: #212830; clip-path: polygon(0 0, 100% 0, 78% 100%, 22% 100%);
`;
const SheetTab = styled.button<{ $w: number }>`position: relative; width: ${(p) => p.$w}px; height: 33px; line-height: 30px; padding-left: 1px;`;
const TabEdge = styled.svg`position: absolute; left: 0; top: 0;`;
const CommandPanel = styled.section`display: flex; height: 208px; margin-top: 9px; background: #b8cfe9;`;
const CommandTools = styled.div`width: 45px; padding-top: 2px; display: flex; flex-direction: column; align-items: center; gap: 9px;`;
const CommandBox = styled.div`
  flex: 1; display: flex; flex-direction: column; background: #fff; color: #000;
  border: 2px solid; border-color: #77797d #f4f4f4 #f4f4f4 #77797d;
`;
const HistoryRow = styled.div`display: flex; height: 170px; border-bottom: 1px solid #66686c;`;
const History = styled.div`
  flex: 1; display: flex; flex-direction: column; justify-content: flex-end; overflow: hidden; padding: 0 0 4px 5px;
`;
const CommandText = styled.p`margin: 0; height: 34px; flex: none; font: 300 28px/34px ${SONG};`;
const Latin = styled.span`font: 400 23px/34px "DejaVu Sans Mono", monospace;`;
const InputRow = styled.div`display: flex; height: 34px; line-height: 32px; padding-left: 5px; align-items: flex-start;`;
const CommandInput = styled.input`flex: 1; min-width: 0; font-size: 23px;`;
const Prompt = styled.label`flex: none; height: 32px; font: 300 28px/30px ${SONG};`;
const PromptLatin = styled(Latin)`line-height: 30px;`;
const VScroll = styled.div`display: grid; grid-template-rows: 33px 67px 34px 1fr; justify-items: center; align-items: center; width: 32px; background: #f0f0f0;`;
const HScroll = styled.div`display: grid; grid-template-columns: 34px 34px 1fr 34px; justify-items: center; align-items: center; width: 160px; height: 33px; margin-right: 34px; background: #f0f0f0;`;
const Thumb = styled.i`width: 100%; height: 100%; background: #cdcdcd;`;
const Track = styled.i`width: 100%; height: 100%; border-top: 1px solid #cdcdcd;`;
const ScrollButton = styled.button`display: grid; place-items: center;`;

const SidePalette = styled.aside`
  width: 46px; flex: none; padding-top: 3px; background: #bfdbff;
`;
const PaletteGroup = styled.div`
  display: flex; flex-direction: column; align-items: center;
  border-top: 8px solid #93bfff; background: linear-gradient(90deg, #a9ccff, #c3dbff 60%, #d9e7ff);
`;
const PaletteButton = styled.button`width: 46px; height: 44px; display: grid; place-items: center;`;

/* ---------- status bar ---------- */

const StatusBar = styled.footer`
  display: flex; height: 47px; border-top: 2px solid #567db1;
  background: linear-gradient(#dbe7fa 0, #c7dbf7 30%, #b3cff5 38%, #cfe0fa 100%);
`;
const StatusLeft = styled.div`display: flex; align-items: center; gap: 8px; width: 917px; padding: 2px 0 0 4px; font-size: 22px;`;
const Coords = styled.span`margin-left: 6px; color: #8c93a0;`;
const StatusTools = styled.div`display: flex; align-items: center; flex: 1;`;
const StatusButton = styled.button<{ $on?: boolean }>`
  width: 36px; height: 42px; margin-right: 2px; flex: none; display: grid; place-items: center;
  ${(p) => p.$on && css`
    border: 1px solid #c7b272; border-radius: 3px;
    background: linear-gradient(#fffbe4 0, #fff0b5 45%, #ffd84f 50%, #ffec9c 100%);
  `}
`;
const ScaleButton = styled.button`display: flex; align-items: center; gap: 4px; width: 48px; flex: none; font-size: 22px;`;
const StatusRight = styled.div`display: flex; align-items: center; padding-right: 14px;`;
const StatusSystem = styled.div`
  display: flex; align-items: center; width: 301px; padding-left: 6px; font-size: 22px;
  border-left: 2px solid #567db1; background: linear-gradient(#b2cdf4 0, #9dbdec 30%, #86ade3 38%, #8caedd 100%);
`;

/* ---------- data ---------- */

const menus: [string, string][] = [
  ["文件", "F"], ["编辑", "E"], ["视图", "V"], ["插入", "I"], ["格式", "O"], ["工具", "T"], ["绘图", "D"], ["文字", "X"],
  ["标注", "N"], ["修改", "M"], ["窗口", "W"], ["应用软件", "A"], ["帮助", "H"], ["扩展工具", "S"], ["项目", "P"], ["云批注", "C"],
];
const tabs = ["常用", "插入", "注释", "三维", "曲面", "网格", "布局", "视图", "管理", "输出", "BIM", "应用软件", "帮助", "扩展工具", "项目", "云批注"];
const sections = ["轴 网", "柱 梁 板", "墙 体", "门 窗", "房间屋顶", "楼梯其他", "三维建模", "立 面", "剖 面"];
const toolGroups: [string, string][][] = [
  [["tStyle", "文字样式"], ["tSingle", "单行文字"], ["tMulti", "多行文字"], ["tInc", "递增文字"], ["tBook", "专业词库"]],
  [["tRotate", "转角自纠"], ["tConvert", "文字转化"], ["tMerge", "文字合并"], ["tAlign", "文字对齐"], ["tHeight", "统一字高"]],
  [["tNew", "新建表格"], ["", "表格编辑"], ["", "单元编辑"], ["tExport", "导出表格"], ["tImport", "导入表格"]],
  [["tFind", "查找替换"]],
];
const sheet = [
  ["普通门", "M0821", "800", "2100", "24", "A"], ["普通门", "M0921", "900", "2100", "20", ""], ["普通门", "M1021", "1000", "2100", "12", ""],
  ["普通窗", "C0215", "220", "1500", "4", ""], ["普通窗", "C0315", "300", "1500", "4", ""], ["普通窗", "C0615", "600", "1500", "8", ""],
  ["普通窗", "C1015", "1000", "1500", "4", ""], ["普通窗", "C1815", "1800", "1500", "4", ""], ["凸窗", "TC1815", "1800", "1500", "8", ""],
];
const gridRows = [
  ["类别", "设计编号", "洞口尺寸", "洞口尺寸", "数量", "图集名称", "页次", "选用型号", "备注"],
  ["类别", "设计编号", "宽度", "高度", "数量", "图集名称", "页次", "选用型号", "备注"],
  ...sheet.map((r) => [...r.slice(0, 5), "", "", r[5], ""]),
];
const spans: Record<number, number> = { 0: 3, 3: 1, 4: 4, 8: 1 };
const history = ["命令:*取消*", "命令:*取消*", "命令:IcSheetEdit", "请选择表格<退出>:", "命令:IcSheetEdit"];

/* ---------- small parts ---------- */

const Mixed = ({ text, as: Part = Latin }: { text: string; as?: typeof Latin }) => (
  <>{text.split(/([ -~]+)/).map((t, i) => (i % 2 ? <Part key={i}>{t}</Part> : t))}</>
);

const LargeTool = ({ icon, text, caret, w }: { icon: string; text: string; caret?: boolean; w?: number }) => (
  <Large $w={w}>
    <LargeIcon name={icon} />
    <LargeText>{text}</LargeText>
    {caret && <CaretRow><Caret /></CaretRow>}
  </Large>
);

const SmallTools = ({ items, caret, w, pad, center }: { items: string[][]; caret?: boolean[]; w?: number; pad?: number; center?: boolean }) => (
  <Column $w={w} $pad={pad}>
    {items.map(([icon, text], i) => (
      <Small key={icon} $center={center} aria-label={text ?? icon}>
        <Icon name={icon} />
        {text}
        {caret?.[i] && <Drop><Caret /></Drop>}
      </Small>
    ))}
  </Column>
);

const RibbonGroup = ({ w, title, caret = true, pad, launcher, children }: { w: number; title: string; caret?: boolean; pad?: number; launcher?: boolean; children: ReactNode }) => (
  <Group $w={w}>
    <GroupBody $pad={pad}>{children}</GroupBody>
    <GroupLabel>
      {caret && <Balance />}
      {title}
      {caret && <Caret />}
      {launcher && (
        <Launcher aria-label="特性面板">
          <svg width="16" height="16" viewBox="0 0 16 16"><path d="M1 12V1h12M6 6l8 8M15 7v8H7" fill="none" stroke="#4f79b8" strokeWidth="2" /></svg>
        </Launcher>
      )}
    </GroupLabel>
  </Group>
);

const ModeIcon = ({ kind }: { kind: number }) => (
  <svg width="46" height="42" viewBox="0 0 46 42" aria-hidden="true">
    {kind === 0 && <g><path d="M3 20L20 3l17 17h-4v16H7V20z" fill="#e8f6fd" stroke="#3f5b78" strokeWidth="2" />{rc(16, 21, 9, 15, "#bcd8ea", "#3f5b78")}{ln("M17 33L41 12", "#b5683a", 6)}{ln("M18 32L40 13", "#ffd9a8", 3)}</g>}
    {kind === 1 && <g>{rc(1, 10, 18, 26, "#b9d8ee", "#8098b0")}{ln("M4 15h12M4 21h12M4 27h12", "#fff", 2)}<circle cx="34" cy="11" r="9" fill="#ffc07a" stroke="#e88a3c" strokeWidth="2" strokeDasharray="4 2" /><circle cx="28" cy="20" r="13" fill="#f4ead9" stroke="#6e8298" strokeWidth="2" /><path d="M22 18a8 6 0 0115-2z" fill="#ffd9a0" />{ln("M38 31l7 7", "#c3cedb", 6)}</g>}
    {kind === 2 && <g><path d="M7 2l28 35H7z" fill="#e0f1fa" stroke="#44607c" strokeWidth="2" />{rc(2, 13, 38, 8, "#cfe6f4", "#44607c")}{ln("M16 34L42 11", "#b5683a", 6)}{ln("M17 33L41 12", "#ffd9a8", 3)}</g>}
    {kind === 3 && <g>{rc(8, 3, 32, 24, "#dff2fb", "#3a5270")}<path d="M45 13v25H24z" fill="#cfe9f6" stroke="#3a5270" strokeWidth="2" /><circle cx="13" cy="27" r="11" fill="#e6f5fc" stroke="#3a5270" strokeWidth="2" /></g>}
    {kind === 4 && <g><circle cx="16" cy="17" r="14" fill="#dff1fb" stroke="#4a647e" strokeWidth="2" />{ln("M20 37l12-14", "#b07040", 7)}<circle cx="37" cy="17" r="6" fill="none" stroke="#b07040" strokeWidth="5" strokeDasharray="28 10" />{glyph("?", 9, 26, 24, "#2c3f55")}</g>}
  </svg>
);

const chevron = (d: string) => <svg width="16" height="16" viewBox="0 0 16 16"><path d={d} fill="none" stroke="#555" strokeWidth="3" /></svg>;

export default function App() {
  return (
    <Page>
      <Global />
      <TitleBar>
        <TitleLeft>
          <Orb aria-label="应用程序菜单">
            <svg width="44" height="40" viewBox="0 0 44 40"><path d="M42 5H19C9 6 4 13 4 21c0 10 8 16 18 15 8-1 13-5 15-13l2-7H22l-4 6h9c-1 5-4 7-8 6-5-1-6-5-5-9 1-5 5-7 10-7h14z" fill="#1c7df5" stroke="#1a53cc" strokeWidth="1" /></svg>
          </Orb>
          <QuickBar>
            {["new", "open", "save", "saveAs", "print", "undo"].map((n) => (
              <QuickButton key={n} aria-label={n}><Icon name={n} size={30} /></QuickButton>
            ))}
            <QuickButton $w={20} aria-label="undo list"><Caret w={12} /></QuickButton>
            <QuickButton aria-label="redo"><Icon name="redo" size={30} /></QuickButton>
            <QuickButton $w={20} aria-label="redo list"><Caret w={12} fill="#9b9b93" /></QuickButton>
            <QuickButton aria-label="layers"><Icon name="layers" size={30} /></QuickButton>
            <QuickButton aria-label="chat"><Icon name="chat" size={30} /></QuickButton>
          </QuickBar>
          <WorkspacePick>
            <PickSelect aria-label="工作空间"><option>二维草图</option></PickSelect>
            <Caret w={12} />
          </WorkspacePick>
          <Customize aria-label="自定义"><Bar /><Caret w={13} fill={INK} /></Customize>
        </TitleLeft>
        <Title>浩辰CAD建筑2024 - [第18课 文字表格：表格、查找替换.dwg]</Title>
        <TitleRight>
          <UserButton aria-label="用户">
            <svg width="60" height="62" viewBox="0 0 60 62"><g fill="none" stroke={D} strokeWidth="3"><path d="M42 3A28 28 0 1056 18" /><circle cx="30" cy="23" r="12" /><path d="M11 51c2-10 10-16 19-16s17 6 19 16" /></g><circle cx="52" cy="9" r="6" fill={R} /></svg>
          </UserButton>
          <WinButton aria-label="最小化"><svg width="20" height="20"><path d="M0 10h20" stroke="#888" strokeWidth="2" /></svg></WinButton>
          <WinButton aria-label="还原"><svg width="20" height="20"><path d="M1 5h14v14H1zM5 5V1h14v14h-4" fill="none" stroke="#888" strokeWidth="2" /></svg></WinButton>
          <WinButton aria-label="关闭"><svg width="20" height="20"><path d="M0 0l20 20M20 0L0 20" stroke="#888" strokeWidth="2" /></svg></WinButton>
        </TitleRight>
      </TitleBar>

      <MenuBar>
        {menus.map(([t, k]) => <MenuItem key={t + k}>{t}(<Key>{k}</Key>)</MenuItem>)}
      </MenuBar>

      <TabBar>
        {tabs.map((t, i) => <Tab key={t} $on={i === 0}>{t}</Tab>)}
        <TabTools>
          <Look>外观<Caret w={10} /></Look>
          <MiniButton aria-label="最小化文档"><svg width="16" height="16"><path d="M0 12h16" stroke="#555e6e" strokeWidth="3" /><path d="M0 15h16" stroke="#fff" strokeWidth="3" /></svg></MiniButton>
          <MiniButton aria-label="还原文档"><svg width="22" height="18"><path d="M1 7h14v9H1zM5 6V2h15v10h-4" fill="none" stroke="#7187a8" strokeWidth="2" /><path d="M5 2h16M1 7h15" stroke="#555e6e" strokeWidth="3" /></svg></MiniButton>
          <MiniButton aria-label="关闭文档"><svg width="20" height="18"><path d="M2 1l16 16M18 1L2 17" stroke="#7187a8" strokeWidth="4" /></svg></MiniButton>
        </TabTools>
      </TabBar>

      <Ribbon>
        <RibbonGroup w={375} title="绘图">
          <LargeTool w={77} icon="line" text="直线" />
          <LargeTool w={77} icon="pline" text="多段线" caret />
          <LargeTool w={77} icon="circle" text="圆" caret />
          <LargeTool w={77} icon="arc" text="圆弧" caret />
          <SmallTools pad={4} items={[["points"], ["ellipse"], ["hatch"]]} caret={[true, true, true]} />
        </RibbonGroup>
        <RibbonGroup w={405} title="修改" pad={6}>
          <SmallTools w={92} items={[["erase", "删除"], ["offset", "偏移"], ["move", "移动"]]} />
          <SmallTools w={92} items={[["explode", "分解"], ["stretch", "拉伸"], ["rotate", "旋转"]]} />
          <SmallTools w={92} items={[["boolean", "布尔"], ["mirror", "镜像"], ["copy", "复制"]]} />
          <SmallTools w={62} items={[["array"], ["fillet"], ["trim"]]} caret={[true, true, true]} />
          <SmallTools w={62} items={[["align"], ["breakAt"], ["scale"]]} caret={[true, true, true]} />
        </RibbonGroup>
        <RibbonGroup w={191} title="注释">
          <LargeTool icon="letterA" text="文字" caret />
          <SmallTools items={[["table", "表格"], ["leader", "引线"], ["dim", "线性"]]} caret={[false, true, true]} />
        </RibbonGroup>
        <RibbonGroup w={524} title="图层">
          <LargeTool w={78} icon="layerProps" text={"图层\n特性"} />
          <Column>
            <IconRow>{["ly1", "ly2", "ly3", "ly4", "ly5", "ly6", "ly7"].map((n) => <IconButton key={n} aria-label={n}><Icon name={n} /></IconButton>)}</IconRow>
            <IconRow>{["ly8", "ly9", "ly10", "ly11", "ly12", "ly13", "ly14"].map((n) => <IconButton key={n} aria-label={n}><Icon name={n} /></IconButton>)}</IconRow>
            <Combo $w={441}>
              <Icon name="bulb" size={30} /><Icon name="sun" size={30} /><Icon name="lockGreen" size={30} /><Swatch />
              <ComboSelect aria-label="图层"><option>0</option></ComboSelect>
              <Caret w={11} fill="#85878a" />
            </Combo>
          </Column>
        </RibbonGroup>
        <RibbonGroup w={199} title="块">
          <LargeTool icon="insert" text="插入" />
          <SmallTools w={36} items={[["blk1"], ["blk2"], ["blk3"]]} center />
          <LargeTool icon="qr" text="二维码" caret />
        </RibbonGroup>
        <RibbonGroup w={464} title="特性" launcher>
          <LargeTool icon="match" text={"特性\n匹配"} />
          <SmallTools w={35} items={[["weights"], ["types"], ["colors"]]} center />
          <Column>
            <Combo $w={345}><Hairline $w={160} $pad={2} /><ComboSelect aria-label="线宽"><option>ByLayer</option></ComboSelect><Caret w={11} fill="#85878a" /></Combo>
            <Combo $w={345}><Hairline $w={146} $pad={9} /><ComboSelect aria-label="线型"><option>ByLayer</option></ComboSelect><Caret w={11} fill="#85878a" /></Combo>
            <Combo $w={345}><Swatch /><ComboSelect aria-label="颜色"><option>ByLayer</option></ComboSelect><Caret w={11} fill="#85878a" /></Combo>
          </Column>
        </RibbonGroup>
        <RibbonGroup w={121} title="组">
          <LargeTool icon="group" text="组" />
          <SmallTools w={34} items={[["grp1"], ["grp2"], ["grp3"]]} center />
        </RibbonGroup>
        <RibbonGroup w={182} title="实用工具" caret={false}>
          <LargeTool icon="measure" text="查询" caret />
          <SmallTools w={36} items={[["ucs"], ["calc"], ["cornerPts"]]} center />
          <SmallTools pad={4} items={[["copies"], ["cascade"], ["select"]]} caret={[true, true, true]} />
        </RibbonGroup>
        <RibbonGroup w={123} title="剪贴板" caret={false}>
          <LargeTool icon="paste" text="粘贴" caret />
          <SmallTools w={36} items={[["paste1"], ["cut"], ["docs"]]} center />
        </RibbonGroup>
      </Ribbon>

      <Workspace>
        <Toolbox>
          <ToolboxTitle><Grip $w={4} $h={26} />工具箱</ToolboxTitle>
          {sections.map((s) => <Section key={s}><Spread>{s}</Spread><Caret w={11} fill="#555" /></Section>)}
          <Section>
            <Spread $bold>文字表格</Spread>
            <svg width="11" height="6" viewBox="0 0 11 6"><path d="M0 6h11L6 0z" fill="#555" /></svg>
          </Section>
          {toolGroups.map((g, i) => (
            <React.Fragment key={i}>
              {i > 0 && <Divider />}
              {g.map(([icon, text]) => (
                <Tool key={text} $bold={text === "表格编辑"}>
                  {icon ? <Icon name={icon} /> : <Blank />}
                  <ToolText>{text}</ToolText>
                  {!icon && <svg width="7" height="12"><path d="M0 0l7 6-7 6z" fill="#555" /></svg>}
                </Tool>
              ))}
            </React.Fragment>
          ))}
          {["建筑设计", "日照分析", "通用工具", "图 库", "设置帮助"].map((m, i) => (
            <Mode key={m} $on={i === 0}><ModeIcon kind={i} /><Spread>{m}</Spread></Mode>
          ))}
        </Toolbox>

        <Center>
          <Canvas>
            <Drawing>
              <DrawingTitle>门窗表</DrawingTitle>
              <colgroup>{[72, 114, 73, 62, 52, 101, 62, 114, 259].map((w, i) => <col key={i} style={{ width: w }} />)}</colgroup>
              <tbody>
                <DrawRow>
                  <DrawHead rowSpan={2}>类别</DrawHead><DrawHead rowSpan={2}>设计编号</DrawHead><DrawHead colSpan={2}>洞口尺寸(mm)</DrawHead>
                  {["数量", "图集名称", "页次", "选用型号", "备注"].map((t) => <DrawHead key={t} rowSpan={2}>{t}</DrawHead>)}
                </DrawRow>
                <DrawRow><DrawHead>宽度</DrawHead><DrawHead>高度</DrawHead></DrawRow>
                {sheet.map((r, i) => (
                  <DrawRow key={r[1]}>
                    {spans[i] && <DrawHead rowSpan={spans[i]}>{r[0]}</DrawHead>}
                    {r.slice(1, 5).map((c, j) => <DrawCell key={j}>{c}</DrawCell>)}
                    <DrawCell /><DrawCell /><DrawCell>{r[5]}</DrawCell><DrawCell />
                  </DrawRow>
                ))}
              </tbody>
            </Drawing>
            <PickBox />
            <UcsMark width="164" height="164" viewBox="258 1216 164 164">
              <path d="M269 1220l12 12 12-12M281 1232v13M269 1260v109h110M394 1346l25 24M419 1346l-25 24M260 1360h19v18h-19z" fill="none" stroke="#fff" strokeWidth="1.5" />
            </UcsMark>
            <HiddenNote width="9" height="24"><path d="M0 2h8M0 11h6M0 16q6 1 7 7" fill="none" stroke="#c8cacc" /></HiddenNote>
            <Dialog role="dialog" aria-label="表格内容">
              <DialogBar>
                <svg width="32" height="28" viewBox="0 0 32 28"><rect x="1" y="1" width="30" height="25" fill="#eee" stroke="#aaa" strokeWidth="2" /><rect x="3" y="4" width="14" height="20" fill="#3e8f8c" /><path d="M3 24V14q8-2 14 4v6z" fill="#5cb56a" /><path d="M20 5h6M20 10h4M20 15h6M20 20h6" stroke="#bbb" strokeWidth="2" /><rect x="25" y="4" width="4" height="12" fill="#5aa58c" /></svg>
                <DialogTitle>表格内容</DialogTitle>
                <DialogWin aria-label="最小化"><svg width="20" height="20"><path d="M0 10h20" stroke="#c8c8c8" strokeWidth="2" /></svg></DialogWin>
                <DialogWin aria-label="最大化"><svg width="20" height="20"><path d="M1 1h18v18H1z" fill="none" stroke="#000" strokeWidth="2" /></svg></DialogWin>
                <DialogWin aria-label="关闭"><svg width="20" height="20"><path d="M0 0l20 20M20 0L0 20" stroke="#000" strokeWidth="2" /></svg></DialogWin>
              </DialogBar>
              <DialogBody>
                <GridFrame>
                  <Grid>
                    <colgroup><col style={{ width: 32 }} />{gridRows[0].map((_, i) => <col key={i} style={{ width: 80 }} />)}</colgroup>
                    <thead><tr><GridHead />{gridRows[0].map((_, i) => <GridHead key={i} />)}</tr></thead>
                    <tbody>
                      {gridRows.map((r, i) => (
                        <tr key={i}><GridHead />{r.map((c, j) => <GridCell key={j} $latin={/^[ -~]+$/.test(c)}>{c}</GridCell>)}</tr>
                      ))}
                      <tr><GridHead><Marker /></GridHead>{gridRows[0].map((_, i) => <GridCell key={i} />)}</tr>
                    </tbody>
                  </Grid>
                </GridFrame>
                <DialogActions>
                  <DialogButton $main>确定</DialogButton>
                  <DialogButton>取消</DialogButton>
                </DialogActions>
              </DialogBody>
            </Dialog>
          </Canvas>

          <LayoutTabs>
            <ModelTab>模型</ModelTab>
            <SheetTab $w={76}><TabEdge width="84" height="34"><path d="M-2 18l10 15h57L83 0" fill="none" stroke="#8fa6c4" /></TabEdge>布局1</SheetTab>
            <SheetTab $w={76}><TabEdge width="84" height="34"><path d="M-2 18l10 15h57L83 0" fill="none" stroke="#8fa6c4" /></TabEdge>布局2</SheetTab>
            <SheetTab $w={30} aria-label="新建布局"><TabEdge width="32" height="34"><path d="M-2 18l8 15h12L30 0" fill="none" stroke="#8fa6c4" /></TabEdge>+</SheetTab>
          </LayoutTabs>

          <CommandPanel>
            <CommandTools>
              <Grip $w={28} $h={4} />
              <button aria-label="关闭"><svg width="26" height="24"><path d="M1 1l24 22M25 1L1 23" stroke="#6b7480" strokeWidth="4" /></svg></button>
              <button aria-label="编辑"><svg width="26" height="26" viewBox="0 0 26 26"><path d="M1 23l3-8L17 2l6 5L10 20z" fill="#a4afbd" stroke="#6b7480" strokeWidth="3" /><path d="M15 23h11M20 17h6" stroke="#6b7480" strokeWidth="3" /></svg></button>
            </CommandTools>
            <CommandBox>
              <HistoryRow>
                <History>{history.map((h, i) => <CommandText key={i}><Mixed text={h} /></CommandText>)}</History>
                <VScroll>
                  <ScrollButton aria-label="向上">{chevron("M1 11l7-7 7 7")}</ScrollButton><Track /><Thumb />
                  <ScrollButton aria-label="向下">{chevron("M1 5l7 7 7-7")}</ScrollButton>
                </VScroll>
              </HistoryRow>
              <InputRow>
                <Prompt htmlFor="cmd"><Mixed text="请选择表格<退出>:" as={PromptLatin} /></Prompt>
                <CommandInput id="cmd" />
                <HScroll>
                  <ScrollButton aria-label="向左">{chevron("M11 1L4 8l7 7")}</ScrollButton><Thumb /><i />
                  <ScrollButton aria-label="向右">{chevron("M5 1l7 7-7 7")}</ScrollButton>
                </HScroll>
              </InputRow>
            </CommandBox>
          </CommandPanel>
        </Center>

        <SidePalette>
          <PaletteGroup>
            {["p1", "p2", "p3", "p4", "p5", "p6", "p7", "", "p9", "p10"].map((n, i) => (n ? <PaletteButton key={i} aria-label={n}><Icon name={n} /></PaletteButton> : <PaletteButton as="span" key={i} />))}
          </PaletteGroup>
        </SidePalette>

        <Arrow $x={190} $y={696} width="156" height="226" viewBox="190 1018 156 226"><path d="M344 1019L310 1034l10 2L190 1241l1 1L336 1046l3 8z" fill="#ff2012" /></Arrow>
        <Arrow $x={1294} $y={462} width="206" height="74" viewBox="1294 784 206 74"><path d="M1498 793L1462 785l7 7L1294 854v2L1474 809l-1 9z" fill="#ff2012" /></Arrow>
        <Arrow $x={2664} $y={77} width="38" height="118" viewBox="2664 399 38 118"><path d="M2681 399l-16 32 8-5 14 90h2l2-91 9 4z" fill="#ff2012" /></Arrow>
      </Workspace>

      <StatusBar>
        <StatusLeft>
          <span>比例 1:100</span><Caret w={11} /><span>单位:mm</span><Coords>-119949, 14057, 0</Coords>
        </StatusLeft>
        <StatusTools>
          {Array.from({ length: 15 }, (_, i) => (
            <StatusButton key={i} $on={[0, 2, 5, 6, 8, 9, 13].includes(i)} aria-label={`s${i + 1}`}><Icon name={`s${i + 1}`} /></StatusButton>
          ))}
          <ScaleButton>1:1<Caret w={11} /></ScaleButton>
          {["s16", "s17", "s18"].map((n) => <StatusButton key={n} aria-label={n}><Icon name={n} /></StatusButton>)}
        </StatusTools>
        <StatusRight>
          {["r1", "r2", "r3", "r4", "r5", "r6"].map((n, i) => <StatusButton key={n} $on={i % 5 === 0} aria-label={n}><Icon name={n} /></StatusButton>)}
        </StatusRight>
        <StatusSystem>
          {["gear", "unlock", "bulb", "chip", "full"].map((n) => <StatusButton key={n} aria-label={n}><Icon name={n} size={30} /></StatusButton>)}
          <span>GstarCAD</span>
        </StatusSystem>
      </StatusBar>
    </Page>
  );
}
